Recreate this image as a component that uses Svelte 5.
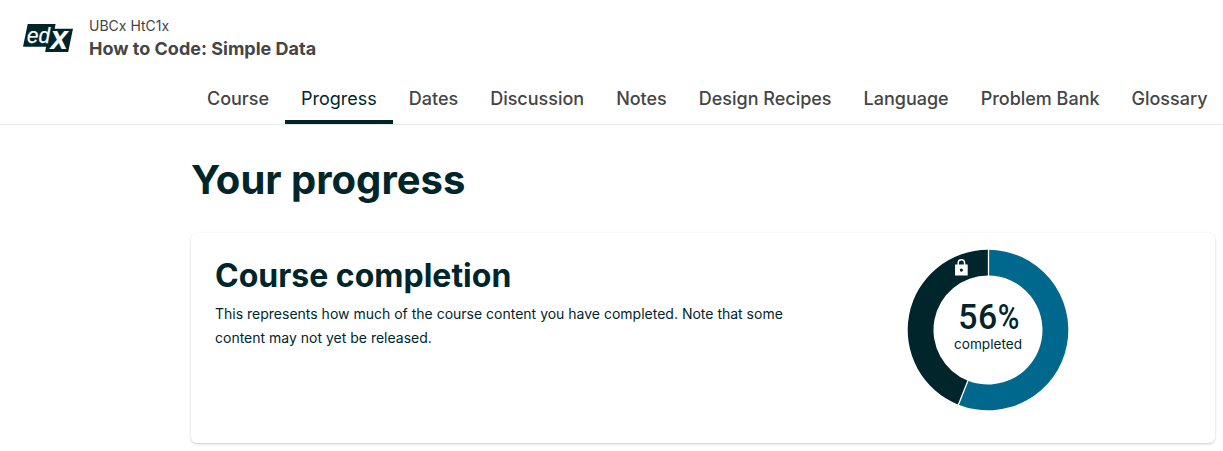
<script>
  const tabs = ['Course', 'Progress', 'Dates', 'Discussion', 'Notes', 'Design Recipes', 'Language', 'Problem Bank', 'Glossary'];
  const active = 'Progress';
  const percent = 56;
  const cx = 81;
  const outer = 80.3;
  const inner = 54.5;

  function point(radius, share) {
    const a = share * 2 * Math.PI;
    return `${cx + radius * Math.sin(a)} ${cx - radius * Math.cos(a)}`;
  }
  function segment(from, to) {
    const large = to - from > 0.5 ? 1 : 0;
    return `M${point(outer, from)}A${outer} ${outer} 0 ${large} 1 ${point(outer, to)}L${point(inner, to)}A${inner} ${inner} 0 ${large} 0 ${point(inner, from)}Z`;
  }
  const share = percent / 100;
</script>

<div class="page">
  <header>
    <svg class="logo" width="50" height="28" viewBox="0 0 50 28" role="img" aria-label="edX">
      <path d="M4.7 0H32.6L31.7 4.7H50L45.2 28H22.1L23.1 22.8H0Z" fill="#00262b" />
      <text class="ed" x="4" y="19" textLength="23" lengthAdjust="spacingAndGlyphs">ed</text>
      <text class="ex" x="27.4" y="25" textLength="17.5" lengthAdjust="spacingAndGlyphs">x</text>
    </svg>
    <div class="names">
      <span class="code">UBCx HtC1x</span>
      <span class="title">How to Code: Simple Data</span>
    </div>
  </header>
  <nav>
    {#each tabs as tab}
      <span class="tab" class:active={tab === active}>{tab}</span>
    {/each}
  </nav>
  <main>
    <h1>Your progress</h1>
    <section class="card">
      <div class="copy">
        <h2>Course completion</h2>
        <p>This represents how much of the course content you have completed. Note that some content may not yet be released.</p>
      </div>
      <svg class="donut" width="162" height="162" viewBox="0 0 162 162">
        <path d={segment(0, share)} fill="#00688d" />
        <path d={segment(share, 1)} fill="#00262b" />
        <path d={`M81.5 ${cx - inner + 1}V0M${point(inner - 1, share)}L${point(outer + 1, share)}`} stroke="#fff" stroke-width="1.3" />
        <g transform="translate(44.9 9.2) scale(.79)">
          <path fill="#fff" fill-rule="evenodd" d="M20 8h-3V6A5 5 0 0 0 7 6v2H4v14h16V8zM12 17a2 2 0 1 1 0-4 2 2 0 0 1 0 4zM8.9 8V6a3.1 3.1 0 0 1 6.2 0v2z" />
        </g>
        <text class="number" transform="translate(51.2 80) scale(.98 1)">{percent}</text>
        <text class="number" transform="translate(90.7 80) scale(.85 1)">%</text>
        <text class="label" x="81" y="100" text-anchor="middle" textLength="68">completed</text>
      </svg>
    </section>
  </main>
</div>

<style>
  :global(body) { margin: 0; background: #fff; }
  .page { width: 1223px; height: 451px; overflow: hidden; font-family: Inter, sans-serif; color: #00262b; }
  header { display: flex; height: 72px; padding-left: 23px; box-sizing: border-box; }
  .logo { margin-top: 24px; flex: none; overflow: visible; }
  .logo text { font-family: "Liberation Sans", Arial, sans-serif; font-style: italic; fill: #fff; }
  .ed { font-size: 22px; stroke: #fff; stroke-width: .25px; }
  .ex { font-size: 34px; font-weight: 700; }
  .names { display: flex; flex-direction: column; margin: 16px 0 0 16px; color: #454545; }
  .code { font-size: 14px; line-height: 20px; }
  .title { font-size: 18px; line-height: 25px; font-weight: 700; }
  nav { display: flex; height: 52px; padding-left: 191px; border-bottom: 1px solid #e7e8e9; }
  .tab { flex: none; padding: 13px 16px 0; font-size: 18px; line-height: 28px; font-weight: 500; color: #454545; letter-spacing: -.01px; }
  .tab.active { color: #00262b; font-weight: 400; border-bottom: 4px solid #00262b; }
  main { padding: 32px 0 0 191px; }
  h1 { margin: 0; font-size: 40px; line-height: 46px; font-weight: 700; }
  .card { display: flex; box-sizing: border-box; width: 1024px; height: 210px; margin-top: 30px; padding: 16px 24px; border-radius: 6px; background: #fff; box-shadow: 0 1px 2px rgba(0,0,0,.15), 0 1px 4px rgba(0,0,0,.07); }
  .copy { width: 600px; padding-top: 9px; }
  h2 { margin: 0; font-size: 32px; line-height: 36px; font-weight: 700; }
  p { margin: 8px 0 0; font-size: 14px; line-height: 24px; }
  .donut { flex: none; margin-left: 92px; }
  .number { font-family: Roboto, sans-serif; font-size: 34.5px; font-weight: 500; letter-spacing: .6px; fill: #00262b; }
  .label { font-size: 13.6px; fill: #00262b; }
</style>
